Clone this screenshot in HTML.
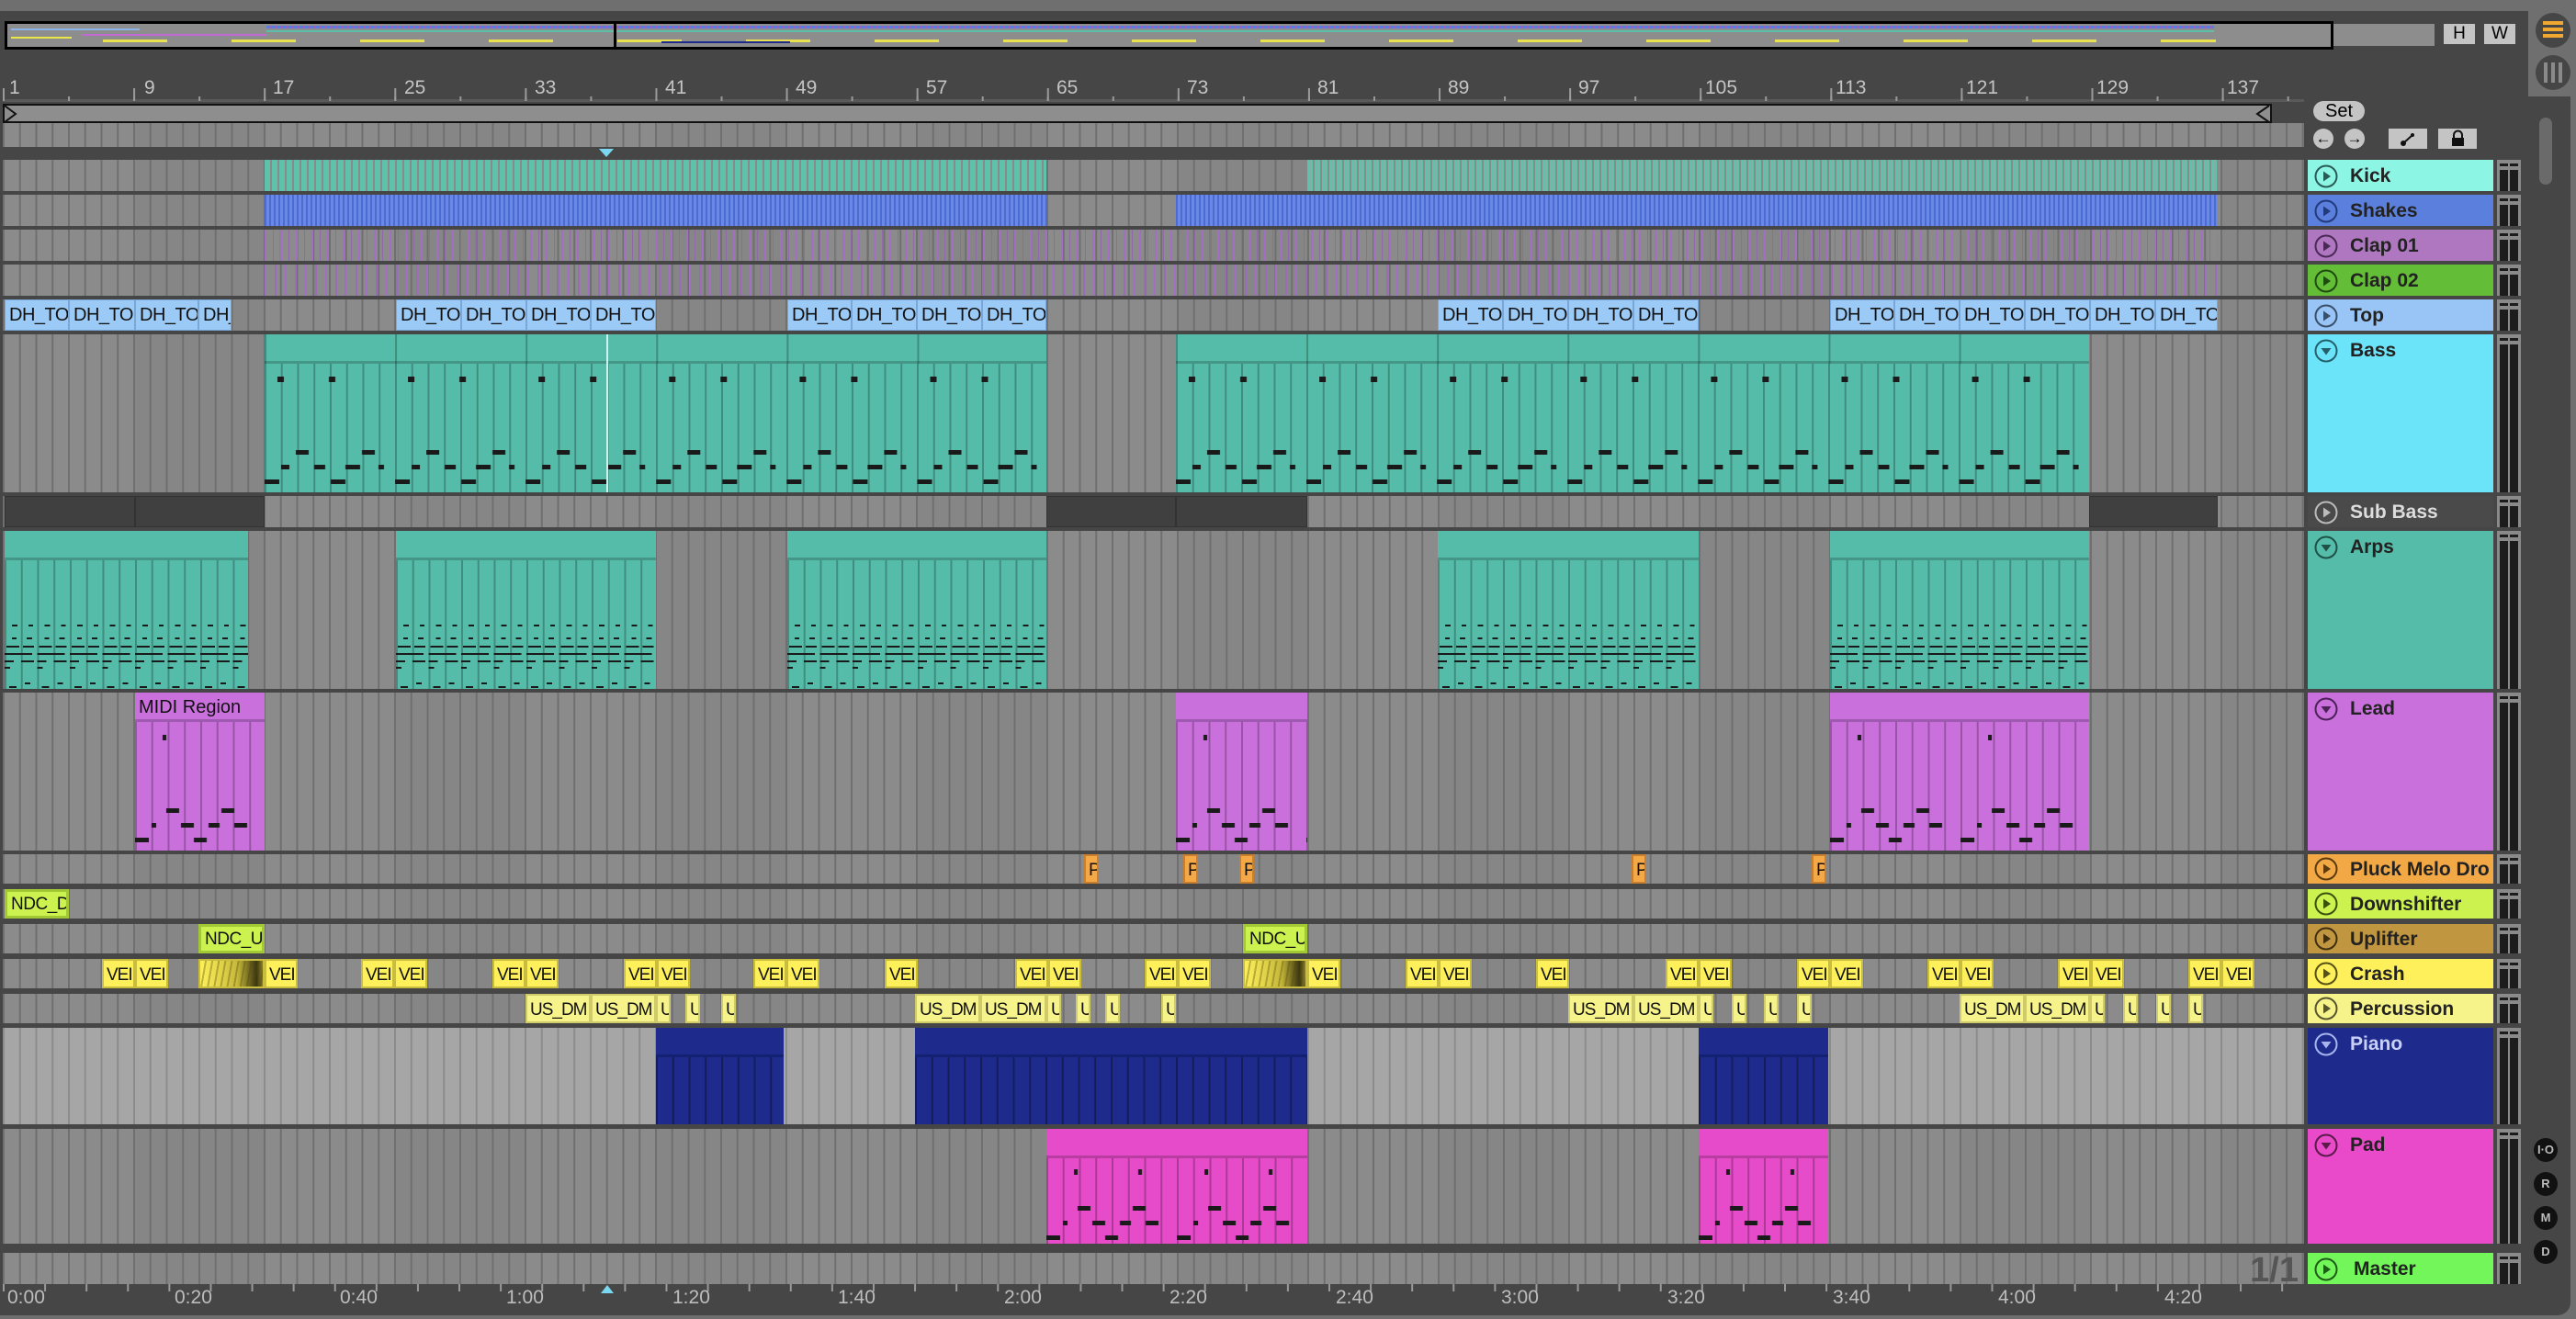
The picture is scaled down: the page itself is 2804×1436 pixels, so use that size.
<!DOCTYPE html>
<html><head><meta charset="utf-8"><style>
*{margin:0;padding:0;box-sizing:border-box}
body{width:2804px;height:1436px;background:#6f6f6f;position:relative;overflow:hidden;font-family:"Liberation Sans",sans-serif}
.a{position:absolute}
.panel{left:0;top:12px;width:2798px;height:1420px;background:#464646;border-radius:0 14px 14px 0}
.row{position:absolute;left:3px;width:2505px;background-color:#8b8b8b;
background-image:linear-gradient(90deg,#6f6f6f 0 2px,transparent 2px),repeating-linear-gradient(90deg,rgba(0,0,0,0) 0 142px,rgba(0,0,0,.04) 142px 284px);
background-size:17.76px 100%,100% 100%;background-position:0 0,0 0;overflow:hidden}
.c{position:absolute;top:0;bottom:0;overflow:hidden;white-space:nowrap;font-size:20px;color:#111;line-height:32px;padding-left:4px;border:1px solid rgba(0,0,0,.15)}
.top{background:#9ccaf6;border-color:#7aa6d8;letter-spacing:-0.5px}
.vei{background:#fdf05a;border:2px solid #c9bd40;padding-left:3px;font-size:19px;letter-spacing:-1px}
.per{background:#f7f38b;border:2px solid #cfcb6a;padding-left:3px;font-size:19px;letter-spacing:-1px}
.ndc{background:#ccf24f;border:3px solid #a2c836;line-height:28px;padding-left:4px;font-size:19px;letter-spacing:-0.5px}
.pl{background:#f4a846;border:2px solid #c88030;padding-left:3px;font-size:19px}
.wave{background:linear-gradient(90deg,#fdf05a 0,#e4d64a 30%,#c5b73a 60%,#3b3510 90%,#8a7f2a 100%);border:2px solid #c9bd40}
.wave::before{content:"";position:absolute;inset:0;background:repeating-linear-gradient(100deg,transparent 0 5px,rgba(80,70,10,.35) 5px 7px)}
.midi{border:none}
.midi .h{position:absolute;left:0;right:0;top:0;height:32px;border-bottom:3px solid rgba(0,0,0,.2)}
.midi .b{position:absolute;left:0;right:0;top:32px;bottom:0;background-image:linear-gradient(90deg,rgba(0,0,0,.25) 0 2px,transparent 2px);background-size:17.76px 100%}
.midi .h span{font-size:20px;line-height:32px;padding-left:4px;color:#111}
.hd{position:absolute;left:2512px;width:202px;font-weight:bold;font-size:21px;color:#222;padding-left:46px;line-height:36px}
.hd svg{position:absolute;left:7px;top:5px}
.mt{position:absolute;left:2718px;width:26px;background:#8a8a8a}
.mt::before,.mt::after{content:"";position:absolute;top:4px;bottom:0;width:9px;background:#1c1c1c;border-top:3px solid #1c1c1c;box-shadow:inset 0 4px 0 #8a8a8a}
.mt::before{left:3px}.mt::after{left:14px}
.rn{position:absolute;top:84px;font-size:21px;color:#c4c4c4}
.tl{position:absolute;top:1401px;font-size:21px;color:#bdbdbd}
.cb{position:absolute;width:26px;height:26px;border-radius:50%;background:#111;color:#bbb;font-size:13px;font-weight:bold;text-align:center;line-height:26px}
</style></head><body>
<div class="a panel"></div>
<div class="a" style="left:5px;top:23px;width:2535px;height:31px;background:#8d8d8d;border:3px solid #000"></div>
<div class="a" style="left:2540px;top:26px;width:110px;height:24px;background:#8d8d8d"></div>
<div class="a" style="left:12px;top:31px;width:140px;height:2px;background:#8ab4e8"></div>
<div class="a" style="left:90px;top:37px;width:200px;height:2px;background:#c06bd5"></div>
<div class="a" style="left:12px;top:40px;width:66px;height:2px;background:#e8e84a"></div>
<div class="a" style="left:290px;top:28px;width:2120px;height:3px;background:repeating-linear-gradient(90deg,#5a7ee0 0 3px,#a060c0 3px 6px)"></div>
<div class="a" style="left:290px;top:33px;width:2120px;height:2px;background:#5cbfa8"></div>
<div class="a" style="left:112px;top:43px;width:2300px;height:3px;background:repeating-linear-gradient(90deg,#e8e050 0 70px,transparent 70px 140px)"></div>
<div class="a" style="left:720px;top:45px;width:140px;height:2px;background:#1e2b8c"></div>
<div class="a" style="left:668px;top:23px;width:3px;height:31px;background:#000"></div>
<div class="a" style="left:2660px;top:26px;width:34px;height:22px;background:#c4c4c4;font-size:19px;text-align:center;line-height:22px">H</div>
<div class="a" style="left:2704px;top:26px;width:34px;height:22px;background:#c4c4c4;font-size:19px;text-align:center;line-height:22px">W</div>
<div class="a" style="left:2752px;top:0;width:52px;height:105px;background:#6f6f6f"></div>
<div class="a" style="left:2760px;top:14px;width:38px;height:38px;border-radius:50%;background:#464646"></div>
<div class="a" style="left:2768px;top:23px;width:22px;height:4px;background:#f0a830;box-shadow:0 7px 0 #f0a830,0 14px 0 #f0a830"></div>
<div class="a" style="left:2760px;top:60px;width:38px;height:38px;border-radius:50%;background:#464646"></div>
<div class="a" style="left:2769px;top:68px;width:4px;height:22px;background:#8a8a8a;box-shadow:8px 0 0 #8a8a8a,16px 0 0 #8a8a8a"></div>
<div class="a" style="left:2764px;top:128px;width:14px;height:73px;border-radius:7px;background:#6a6a6a"></div>
<div class="a" style="left:3px;top:108px;width:2505px;height:3px;background:#595959"></div>
<div class="rn" style="left:10px">1</div><div class="rn" style="left:157px">9</div><div class="rn" style="left:297px">17</div><div class="rn" style="left:440px">25</div><div class="rn" style="left:582px">33</div><div class="rn" style="left:724px">41</div><div class="rn" style="left:866px">49</div><div class="rn" style="left:1008px">57</div><div class="rn" style="left:1150px">65</div><div class="rn" style="left:1292px">73</div><div class="rn" style="left:1434px">81</div><div class="rn" style="left:1576px">89</div><div class="rn" style="left:1718px">97</div><div class="rn" style="left:1856px">105</div><div class="rn" style="left:1998px">113</div><div class="rn" style="left:2140px">121</div><div class="rn" style="left:2282px">129</div><div class="rn" style="left:2424px">137</div>
<div class="a" style="left:3px;top:96px;width:2505px;height:14px;background-image:linear-gradient(90deg,#9a9a9a 0 2px,transparent 2px),linear-gradient(90deg,#9a9a9a 0 2px,transparent 2px);background-size:142.1px 14px,71.05px 5px;background-repeat:repeat-x;background-position:0 0,0 9px"></div>
<div class="a" style="left:3px;top:113px;width:2470px;height:21px;background:#8e8e8e;border:2px solid #111"></div>
<svg class="a" style="left:4px;top:114px" width="16" height="20"><path d="M1 1 L13 10 L1 19" fill="none" stroke="#111" stroke-width="2"/></svg>
<svg class="a" style="left:2454px;top:114px" width="18" height="20"><path d="M16 1 L3 10 L16 19" fill="none" stroke="#111" stroke-width="2"/></svg>
<div class="row" style="top:134px;height:26px"></div>
<svg class="a" style="left:652px;top:162px" width="16" height="10"><path d="M0 0 H16 L8 9Z" fill="#7ad8f0"/></svg>

<div class="row" style="top:174px;height:34px">
<div class="c" style="left:285px;width:851px;background:repeating-linear-gradient(90deg,#5ec2ab 0 3px,#80b0a6 3px 4px,#5ec2ab 4px 6px,#8a8a8a 6px 8px);border:none"></div>
<div class="c" style="left:1420px;width:991px;background:repeating-linear-gradient(90deg,#5ec2ab 0 3px,#80b0a6 3px 4px,#5ec2ab 4px 6px,#8a8a8a 6px 8px);border:none"></div>
</div>
<div class="row" style="top:212px;height:34px">
<div class="c" style="left:285px;width:851px;background:repeating-linear-gradient(90deg,#4b6bd2 0 2px,#6a88e6 2px 5px);border:none"></div>
<div class="c" style="left:1277px;width:1134px;background:repeating-linear-gradient(90deg,#4b6bd2 0 2px,#6a88e6 2px 5px);border:none"></div>
</div>
<div class="row" style="top:250px;height:34px">
<div class="c" style="left:285px;width:2126px;background:repeating-linear-gradient(90deg,#a36ec4 0 2px,transparent 2px 9px,#8f6aa8 9px 10px,transparent 10px 17px);border:none"></div>
</div>
<div class="row" style="top:288px;height:34px">
<div class="c" style="left:285px;width:2126px;background:repeating-linear-gradient(90deg,#a36ec4 0 2px,transparent 2px 11px,#9a6cb8 11px 13px,transparent 13px 22px);border:none"></div>
</div>
<div class="row" style="top:326px;height:34px">
<div class="c top" style="left:2px;width:70px">DH_TO</div><div class="c top" style="left:72px;width:72px">DH_TO</div><div class="c top" style="left:144px;width:69px">DH_TO</div><div class="c top" style="left:213px;width:36px">DH_</div>
<div class="c top" style="left:428px;width:71px">DH_TO</div><div class="c top" style="left:499px;width:71px">DH_TO</div><div class="c top" style="left:570px;width:70px">DH_TO</div><div class="c top" style="left:640px;width:71px">DH_TO</div>
<div class="c top" style="left:854px;width:70px">DH_TO</div><div class="c top" style="left:924px;width:71px">DH_TO</div><div class="c top" style="left:995px;width:71px">DH_TO</div><div class="c top" style="left:1066px;width:70px">DH_TO</div>
<div class="c top" style="left:1562px;width:71px">DH_TO</div><div class="c top" style="left:1633px;width:71px">DH_TO</div><div class="c top" style="left:1704px;width:71px">DH_TO</div><div class="c top" style="left:1775px;width:71px">DH_TO</div>
<div class="c top" style="left:1989px;width:70px">DH_TO</div><div class="c top" style="left:2059px;width:71px">DH_TO</div><div class="c top" style="left:2130px;width:71px">DH_TO</div><div class="c top" style="left:2201px;width:71px">DH_TO</div><div class="c top" style="left:2272px;width:71px">DH_TO</div><div class="c top" style="left:2343px;width:68px">DH_TO</div>
</div>
<svg width="0" height="0" style="position:absolute"><defs>
<pattern id="bn" width="142.1" height="140" patternUnits="userSpaceOnUse"><g fill="#1a1a1a">
<rect x="14" y="14" width="7" height="6"/><rect x="70" y="14" width="7" height="6"/><rect x="34" y="94" width="14" height="5"/><rect x="106" y="94" width="14" height="5"/><rect x="18" y="110" width="9" height="5"/><rect x="54" y="110" width="12" height="5"/><rect x="88" y="110" width="16" height="5"/><rect x="124" y="110" width="6" height="5"/><rect x="0" y="126" width="16" height="5"/><rect x="72" y="126" width="16" height="5"/></g></pattern>
<pattern id="an" width="35.5" height="140" patternUnits="userSpaceOnUse"><g fill="#1a1a1a">
<rect x="8" y="70" width="6" height="2"/><rect x="26" y="70" width="5" height="2"/><rect x="8" y="84" width="5" height="2"/><rect x="24" y="84" width="6" height="2"/><rect x="2" y="93" width="14" height="2"/><rect x="20" y="93" width="12" height="2"/><rect x="0" y="101" width="30" height="2"/><rect x="0" y="109" width="10" height="2"/><rect x="18" y="109" width="14" height="2"/><rect x="0" y="116" width="6" height="2"/><rect x="5" y="137" width="8" height="2"/><rect x="22" y="133" width="6" height="2"/></g></pattern>
<pattern id="ln" width="142.1" height="140" patternUnits="userSpaceOnUse"><g fill="#1a1a1a">
<rect x="30" y="14" width="4" height="6"/><rect x="34" y="94" width="14" height="5"/><rect x="94" y="94" width="14" height="5"/><rect x="18" y="110" width="5" height="5"/><rect x="50" y="110" width="14" height="5"/><rect x="80" y="110" width="12" height="5"/><rect x="108" y="110" width="14" height="5"/><rect x="0" y="126" width="15" height="5"/><rect x="64" y="126" width="14" height="5"/></g></pattern>
<pattern id="pn" width="142.1" height="93" patternUnits="userSpaceOnUse"><g fill="#1a1a1a">
<rect x="30" y="12" width="4" height="6"/><rect x="100" y="12" width="4" height="6"/><rect x="34" y="52" width="14" height="5"/><rect x="94" y="52" width="14" height="5"/><rect x="18" y="68" width="5" height="5"/><rect x="50" y="68" width="14" height="5"/><rect x="80" y="68" width="12" height="5"/><rect x="108" y="68" width="14" height="5"/><rect x="0" y="84" width="15" height="5"/><rect x="64" y="84" width="14" height="5"/></g></pattern>
</defs></svg>
<div class="row" style="top:364px;height:172px">
<div class="c midi" style="left:285px;width:851px;background:#55bca9"><div class="h" style="background:#55bca9;background-image:linear-gradient(90deg,rgba(0,0,0,.25) 0 2px,transparent 2px);background-size:142.1px 100%"></div><div class="b"><svg width="100%" height="100%"><rect width="100%" height="100%" fill="url(#bn)"/></svg></div></div>
<div class="c midi" style="left:1277px;width:994px;background:#55bca9"><div class="h" style="background:#55bca9;background-image:linear-gradient(90deg,rgba(0,0,0,.25) 0 2px,transparent 2px);background-size:142.1px 100%"></div><div class="b"><svg width="100%" height="100%"><rect width="100%" height="100%" fill="url(#bn)"/></svg></div></div>
<div class="a" style="left:657px;top:0;width:2px;height:172px;background:#c8f4f0"></div>
</div>
<div class="row" style="top:540px;height:34px">
<div class="c" style="left:2px;width:142px;background:#404040;border-color:#333"></div><div class="c" style="left:144px;width:141px;background:#404040;border-color:#333"></div>
<div class="c" style="left:1136px;width:141px;background:#404040;border-color:#333"></div><div class="c" style="left:1277px;width:143px;background:#404040;border-color:#333"></div>
<div class="c" style="left:2271px;width:140px;background:#404040;border-color:#333"></div>
</div>
<div class="row" style="top:578px;height:172px">
<div class="c midi" style="left:2px;width:265px;background:#55bca9"><div class="h" style="background:#55bca9"></div><div class="b"><svg width="100%" height="100%"><rect width="100%" height="100%" fill="url(#an)"/></svg></div></div>
<div class="c midi" style="left:428px;width:283px;background:#55bca9"><div class="h" style="background:#55bca9"></div><div class="b"><svg width="100%" height="100%"><rect width="100%" height="100%" fill="url(#an)"/></svg></div></div>
<div class="c midi" style="left:854px;width:282px;background:#55bca9"><div class="h" style="background:#55bca9"></div><div class="b"><svg width="100%" height="100%"><rect width="100%" height="100%" fill="url(#an)"/></svg></div></div>
<div class="c midi" style="left:1562px;width:284px;background:#55bca9"><div class="h" style="background:#55bca9"></div><div class="b"><svg width="100%" height="100%"><rect width="100%" height="100%" fill="url(#an)"/></svg></div></div>
<div class="c midi" style="left:1989px;width:282px;background:#55bca9"><div class="h" style="background:#55bca9"></div><div class="b"><svg width="100%" height="100%"><rect width="100%" height="100%" fill="url(#an)"/></svg></div></div>
</div>
<div class="row" style="top:754px;height:172px">
<div class="c midi" style="left:144px;width:141px;background:#c970dc"><div class="h" style="background:#c970dc"><span>MIDI Region</span></div><div class="b"><svg width="100%" height="100%"><rect width="100%" height="100%" fill="url(#ln)"/></svg></div></div>
<div class="c midi" style="left:1277px;width:143px;background:#c970dc"><div class="h" style="background:#c970dc"></div><div class="b"><svg width="100%" height="100%"><rect width="100%" height="100%" fill="url(#ln)"/></svg></div></div>
<div class="c midi" style="left:1989px;width:282px;background:#c970dc"><div class="h" style="background:#c970dc"></div><div class="b"><svg width="100%" height="100%"><rect width="100%" height="100%" fill="url(#ln)"/></svg></div></div>
</div>
<div class="row" style="top:930px;height:32px">
<div class="c pl" style="left:1177px;width:16px">P</div><div class="c pl" style="left:1285px;width:16px">P</div><div class="c pl" style="left:1346px;width:16px">P</div><div class="c pl" style="left:1773px;width:16px">P</div><div class="c pl" style="left:1969px;width:16px">P</div>
</div>
<div class="row" style="top:968px;height:32px"><div class="c ndc" style="left:2px;width:70px">NDC_D</div></div>
<div class="row" style="top:1006px;height:32px"><div class="c ndc" style="left:213px;width:72px">NDC_U</div><div class="c ndc" style="left:1350px;width:70px">NDC_U</div></div>
<div class="row" style="top:1044px;height:32px">
<div class="c vei" style="left:108px;width:36px">VEI</div><div class="c vei" style="left:144px;width:36px">VEI</div>
<div class="c wave" style="left:213px;width:72px"></div><div class="c vei" style="left:285px;width:36px">VEI</div>
<div class="c vei" style="left:390px;width:36px">VEI</div><div class="c vei" style="left:426px;width:36px">VEI</div>
<div class="c vei" style="left:533px;width:36px">VEI</div><div class="c vei" style="left:569px;width:36px">VEI</div>
<div class="c vei" style="left:676px;width:36px">VEI</div><div class="c vei" style="left:712px;width:36px">VEI</div>
<div class="c vei" style="left:817px;width:36px">VEI</div><div class="c vei" style="left:853px;width:36px">VEI</div>
<div class="c vei" style="left:960px;width:36px">VEI</div>
<div class="c vei" style="left:1102px;width:36px">VEI</div><div class="c vei" style="left:1138px;width:36px">VEI</div>
<div class="c vei" style="left:1243px;width:36px">VEI</div><div class="c vei" style="left:1279px;width:36px">VEI</div>
<div class="c wave" style="left:1350px;width:70px"></div><div class="c vei" style="left:1420px;width:36px">VEI</div>
<div class="c vei" style="left:1527px;width:36px">VEI</div><div class="c vei" style="left:1563px;width:36px">VEI</div>
<div class="c vei" style="left:1669px;width:36px">VEI</div>
<div class="c vei" style="left:1810px;width:36px">VEI</div><div class="c vei" style="left:1846px;width:36px">VEI</div>
<div class="c vei" style="left:1953px;width:36px">VEI</div><div class="c vei" style="left:1989px;width:36px">VEI</div>
<div class="c vei" style="left:2095px;width:36px">VEI</div><div class="c vei" style="left:2131px;width:36px">VEI</div>
<div class="c vei" style="left:2237px;width:36px">VEI</div><div class="c vei" style="left:2273px;width:36px">VEI</div>
<div class="c vei" style="left:2379px;width:36px">VEI</div><div class="c vei" style="left:2415px;width:36px">VEI</div>
</div>
<div class="row" style="top:1082px;height:32px">
<div class="c per" style="left:569px;width:71px">US_DM</div><div class="c per" style="left:640px;width:71px">US_DM</div><div class="c per" style="left:711px;width:16px">U</div><div class="c per" style="left:743px;width:16px">U</div><div class="c per" style="left:782px;width:16px">U</div>
<div class="c per" style="left:993px;width:71px">US_DM</div><div class="c per" style="left:1064px;width:72px">US_DM</div><div class="c per" style="left:1136px;width:16px">U</div><div class="c per" style="left:1168px;width:16px">U</div><div class="c per" style="left:1200px;width:16px">U</div><div class="c per" style="left:1261px;width:16px">U</div>
<div class="c per" style="left:1704px;width:71px">US_DM</div><div class="c per" style="left:1775px;width:71px">US_DM</div><div class="c per" style="left:1846px;width:16px">U</div><div class="c per" style="left:1882px;width:16px">U</div><div class="c per" style="left:1917px;width:16px">U</div><div class="c per" style="left:1953px;width:16px">U</div>
<div class="c per" style="left:2130px;width:71px">US_DM</div><div class="c per" style="left:2201px;width:71px">US_DM</div><div class="c per" style="left:2272px;width:16px">U</div><div class="c per" style="left:2308px;width:16px">U</div><div class="c per" style="left:2344px;width:16px">U</div><div class="c per" style="left:2379px;width:16px">U</div>
</div>
<div class="row" style="top:1119px;height:105px;background-color:#a6a6a6;background-image:linear-gradient(90deg,#8c8c8c 0 2px,transparent 2px)">
<div class="c midi" style="left:711px;width:139px;background:#1e2b8c"><div class="h" style="background:#1e2b8c;border-bottom-color:#142070"></div><div class="b" style="background-image:linear-gradient(90deg,rgba(0,0,0,.35) 0 2px,transparent 2px)"></div></div>
<div class="c midi" style="left:993px;width:427px;background:#1e2b8c"><div class="h" style="background:#1e2b8c;border-bottom-color:#142070"></div><div class="b" style="background-image:linear-gradient(90deg,rgba(0,0,0,.35) 0 2px,transparent 2px)"></div></div>
<div class="c midi" style="left:1846px;width:141px;background:#1e2b8c"><div class="h" style="background:#1e2b8c;border-bottom-color:#142070"></div><div class="b" style="background-image:linear-gradient(90deg,rgba(0,0,0,.35) 0 2px,transparent 2px)"></div></div>
</div>
<div class="row" style="top:1229px;height:125px">
<div class="c midi" style="left:1136px;width:284px;background:#e64bca"><div class="h" style="background:#e64bca"></div><div class="b"><svg width="100%" height="100%"><rect width="100%" height="100%" fill="url(#pn)"/></svg></div></div>
<div class="c midi" style="left:1846px;width:141px;background:#e64bca"><div class="h" style="background:#e64bca"></div><div class="b"><svg width="100%" height="100%"><rect width="100%" height="100%" fill="url(#pn)"/></svg></div></div>
</div>
<div class="row" style="top:1364px;height:34px"><div class="a" style="right:6px;top:-2px;font-size:38px;font-weight:bold;color:#555">1/1</div></div>
<div class="a" style="left:3px;top:1398px;width:2505px;height:8px;background-image:linear-gradient(90deg,#9a9a9a 0 2px,transparent 2px);background-size:45.1px 8px"></div>
<div class="tl" style="left:8px">0:00</div><div class="tl" style="left:190px">0:20</div><div class="tl" style="left:370px">0:40</div><div class="tl" style="left:551px">1:00</div><div class="tl" style="left:732px">1:20</div><div class="tl" style="left:912px">1:40</div><div class="tl" style="left:1093px">2:00</div><div class="tl" style="left:1273px">2:20</div><div class="tl" style="left:1454px">2:40</div><div class="tl" style="left:1634px">3:00</div><div class="tl" style="left:1815px">3:20</div><div class="tl" style="left:1995px">3:40</div><div class="tl" style="left:2175px">4:00</div><div class="tl" style="left:2356px">4:20</div>
<svg class="a" style="left:654px;top:1399px" width="14" height="9"><path d="M0 9 H14 L7 0Z" fill="#7ad8f0"/></svg>

<div class="a" style="left:2518px;top:110px;width:56px;height:22px;border-radius:11px;background:#c4c4c4;font-size:20px;text-align:center;line-height:22px">Set</div>
<div class="a" style="left:2518px;top:140px;width:22px;height:22px;border-radius:50%;background:#c4c4c4;font-size:17px;font-weight:bold;text-align:center;line-height:22px">←</div>
<div class="a" style="left:2552px;top:140px;width:22px;height:22px;border-radius:50%;background:#c4c4c4;font-size:17px;font-weight:bold;text-align:center;line-height:22px">→</div>
<div class="a" style="left:2600px;top:140px;width:42px;height:22px;background:#c4c4c4"><svg width="42" height="22"><path d="M16 16 L26 7" stroke="#111" stroke-width="2"/><circle cx="16" cy="16" r="3" fill="#111"/><circle cx="26" cy="7" r="2" fill="#111"/></svg></div>
<div class="a" style="left:2654px;top:140px;width:42px;height:22px;background:#c4c4c4"><svg width="42" height="22"><rect x="15" y="10" width="13" height="9" fill="#111"/><path d="M17 10 V7 a4 4 0 0 1 9 0 V10" fill="none" stroke="#111" stroke-width="2"/></svg></div>

<svg width="0" height="0" style="position:absolute"><defs>
<g id="pi"><circle cx="13" cy="13" r="11.5" fill="none" stroke="currentColor" stroke-width="2"/><path d="M10 7.5 L18 13 L10 18.5Z" fill="currentColor"/></g>
<g id="di"><circle cx="13" cy="13" r="11.5" fill="none" stroke="currentColor" stroke-width="2"/><path d="M7.5 10 L18.5 10 L13 17.5Z" fill="currentColor"/></g>
</defs></svg>
<div class="hd" style="top:174px;height:34px;background:#8df5e3"><svg width="26" height="26" style="color:#2a5a55"><use href="#pi"/></svg>Kick</div><div class="mt" style="top:174px;height:34px"></div>
<div class="hd" style="top:212px;height:34px;background:#5a7fdc"><svg width="26" height="26" style="color:#233a7a"><use href="#pi"/></svg>Shakes</div><div class="mt" style="top:212px;height:34px"></div>
<div class="hd" style="top:250px;height:34px;background:#ae77c0"><svg width="26" height="26" style="color:#4a2a55"><use href="#pi"/></svg>Clap 01</div><div class="mt" style="top:250px;height:34px"></div>
<div class="hd" style="top:288px;height:34px;background:#64bd37"><svg width="26" height="26" style="color:#1f4a12"><use href="#pi"/></svg>Clap 02</div><div class="mt" style="top:288px;height:34px"></div>
<div class="hd" style="top:326px;height:34px;background:#98c5f6"><svg width="26" height="26" style="color:#3a4f6a"><use href="#pi"/></svg>Top</div><div class="mt" style="top:326px;height:34px"></div>
<div class="hd" style="top:364px;height:172px;background:#6be3f8"><svg width="26" height="26" style="color:#25606a"><use href="#di"/></svg>Bass</div><div class="mt" style="top:364px;height:172px"></div>
<div class="hd" style="top:540px;height:34px;background:#4a4a4a;color:#ddd"><svg width="26" height="26" style="color:#bbb"><use href="#pi"/></svg>Sub Bass</div><div class="mt" style="top:540px;height:34px"></div>
<div class="hd" style="top:578px;height:172px;background:#55bca9"><svg width="26" height="26" style="color:#1f5048"><use href="#di"/></svg>Arps</div><div class="mt" style="top:578px;height:172px"></div>
<div class="hd" style="top:754px;height:172px;background:#c970dc"><svg width="26" height="26" style="color:#4a2258"><use href="#di"/></svg>Lead</div><div class="mt" style="top:754px;height:172px"></div>
<div class="hd" style="top:930px;height:32px;background:#f3a846;line-height:33px"><svg width="26" height="26" style="color:#5a3a10;top:3px"><use href="#pi"/></svg>Pluck Melo Dro</div><div class="mt" style="top:930px;height:32px"></div>
<div class="hd" style="top:968px;height:32px;background:#ccf24f;line-height:33px"><svg width="26" height="26" style="color:#3a5010;top:3px"><use href="#pi"/></svg>Downshifter</div><div class="mt" style="top:968px;height:32px"></div>
<div class="hd" style="top:1006px;height:32px;background:#c09640;line-height:33px"><svg width="26" height="26" style="color:#3e2e10;top:3px"><use href="#pi"/></svg>Uplifter</div><div class="mt" style="top:1006px;height:32px"></div>
<div class="hd" style="top:1044px;height:32px;background:#fdf05a;line-height:33px"><svg width="26" height="26" style="color:#555018;top:3px"><use href="#pi"/></svg>Crash</div><div class="mt" style="top:1044px;height:32px"></div>
<div class="hd" style="top:1082px;height:32px;background:#f7f38b;line-height:33px"><svg width="26" height="26" style="color:#555530;top:3px"><use href="#pi"/></svg>Percussion</div><div class="mt" style="top:1082px;height:32px"></div>
<div class="hd" style="top:1119px;height:105px;background:#1f2b8c;color:#c8d0f5"><svg width="26" height="26" style="color:#a8b4ee"><use href="#di"/></svg>Piano</div><div class="mt" style="top:1119px;height:105px"></div>
<div class="hd" style="top:1229px;height:125px;background:#e84ac9"><svg width="26" height="26" style="color:#5a1a4a"><use href="#di"/></svg>Pad</div><div class="mt" style="top:1229px;height:125px"></div>
<div class="hd" style="top:1364px;height:34px;background:#72f65a;padding-left:50px"><svg width="26" height="26" style="color:#1e5a18"><use href="#pi"/></svg>Master</div><div class="mt" style="top:1364px;height:34px"></div>

<div class="cb" style="left:2758px;top:1239px">I·O</div>
<div class="cb" style="left:2758px;top:1276px">R</div>
<div class="cb" style="left:2758px;top:1313px">M</div>
<div class="cb" style="left:2758px;top:1350px">D</div>
</body></html>
